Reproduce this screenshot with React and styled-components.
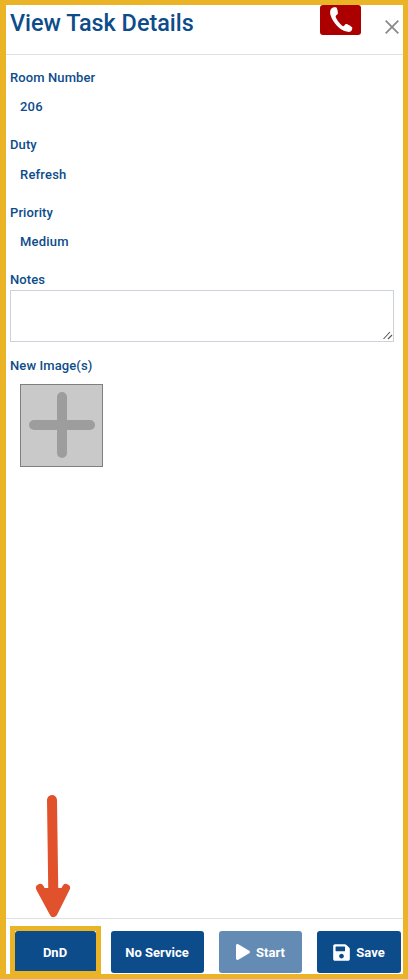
import * as React from "react";
import styled, { createGlobalStyle } from "styled-components";
import { FaPlay, FaSave } from "react-icons/fa";

const GlobalStyle = createGlobalStyle`
  html, body {
    margin: 0;
    padding: 0;
    background: #fff;
    font-family: Roboto, "Liberation Sans", sans-serif;
  }
`;

const Page = styled.div`
  position: relative;
  width: 408px;
  height: 979px;
  overflow: hidden;
  display: flex;
  flex-direction: column;
  background: #fff;
  color: #0d4c8b;
`;

const Frame = styled.div`
  position: absolute;
  inset: 0;
  box-sizing: border-box;
  border-style: solid;
  border-color: #ebb326;
  border-width: 5px 5px 5px 6px;
  pointer-events: none;
`;

const ButtonMark = styled.div`
  position: absolute;
  left: 10px;
  top: 926px;
  width: 91px;
  height: 50px;
  box-sizing: border-box;
  border: 5px solid #ebb326;
  pointer-events: none;
`;

const Arrow = styled.svg`
  position: absolute;
  left: 30px;
  top: 790px;
  pointer-events: none;
`;

const Header = styled.header`
  height: 54px;
  flex: none;
  display: flex;
  align-items: flex-start;
  padding: 0 9px 0 10px;
  border-bottom: 1px solid #e0e0e4;
`;

const Title = styled.h1`
  margin: 10px 0 0;
  font-size: 23.4px;
  line-height: 26px;
  font-weight: 500;
  flex: 1;
`;

const CallButton = styled.div`
  width: 41px;
  height: 30px;
  margin-top: 5px;
  background: #ac0000;
  border-radius: 3px;
  display: flex;
  align-items: center;
  justify-content: center;
`;

const Close = styled.svg`
  margin: 20px 0 0 24px;
  flex: none;
`;

const Body = styled.main`
  flex: 1;
  padding: 15px 14px 0 10px;
`;

const Label = styled.div`
  font-size: 13px;
  line-height: 16px;
  font-weight: 500;
  letter-spacing: 0.1px;
`;

const Value = styled.div`
  font-size: 13px;
  line-height: 16px;
  font-weight: 500;
  padding-left: 10px;
  margin: 13.2px 0 22.2px;
  letter-spacing: 0.2px;
`;

const NotesWrap = styled.div`
  position: relative;
  margin: 1.8px 0 16px;
`;

const Notes = styled.textarea`
  display: block;
  box-sizing: border-box;
  width: 384px;
  height: 52px;
  border: 1px solid #cdd2da;
  border-radius: 0;
  outline: none;
  background: #fff;
  resize: none;
`;

const ResizeGrip = styled.svg`
  position: absolute;
  right: 1px;
  bottom: 2px;
  pointer-events: none;
`;

const AddImage = styled.div`
  width: 83px;
  height: 83px;
  box-sizing: border-box;
  margin: 10px 0 0 10px;
  background: #c9c9c9;
  border: 1px solid #7f7f7f;
  display: flex;
  align-items: center;
  justify-content: center;
`;

const Footer = styled.footer`
  height: 61px;
  flex: none;
  box-sizing: border-box;
  border-top: 1px solid #e0e0e4;
  padding: 12px 7px 0 15px;
  display: flex;
  justify-content: space-between;
`;

const ActionButton = styled.div`
  width: ${(props) => props.$width}px;
  height: 42px;
  box-sizing: border-box;
  padding-right: 1px;
  background: ${(props) => (props.$disabled ? "#648bb3" : "#0d4c8b")};
  border-radius: 3px;
  color: #fff;
  display: flex;
  align-items: center;
  justify-content: center;
  gap: 5px;
  font-size: 13px;
  font-weight: 700;
`;

const fields = [
  { label: "Room Number", value: "206" },
  { label: "Duty", value: "Refresh" },
  { label: "Priority", value: "Medium" },
];

export default function App() {
  return (
    <Page>
      <GlobalStyle />
      <Header>
        <Title>View Task Details</Title>
        <CallButton>
          <svg width="24" height="26" viewBox="0 0 24 26">
            <path
              d="M2.4 1.6 C3.6 .4 6.4 -.2 7.4 .6 C8.4 2 9.2 5.6 8.8 6.8 C8.4 7.8 6.6 8.4 6.6 9.6 C7.2 12.6 11.6 18 14 19.2 C15.2 19.4 15.8 17.4 16.8 17 C18.4 17 22.4 19.2 23.2 20.6 C23.6 21.8 22.4 24.4 21 24.8 C18.6 25.4 14.4 24 11 21.6 C6.4 18 2.8 12.6 1.4 7.8 C.8 5.4 1.2 2.8 2.4 1.6 Z"
              fill="#fff"
            />
          </svg>
        </CallButton>
        <Close width="14" height="14" viewBox="0 0 14 14">
          <path d="M.7 .7 L13.3 13.3 M13.3 .7 L.7 13.3" stroke="#8a8a8a" strokeWidth="1.8" fill="none" />
        </Close>
      </Header>
      <Body>
        {fields.map((field) => (
          <div key={field.label}>
            <Label>{field.label}</Label>
            <Value>{field.value}</Value>
          </div>
        ))}
        <Label>Notes</Label>
        <NotesWrap>
          <Notes />
          <ResizeGrip width="10" height="9" viewBox="0 0 10 9">
            <path d="M.5 8 L7 1 M5 8 L9 4" stroke="#555" strokeWidth="1.1" fill="none" />
          </ResizeGrip>
        </NotesWrap>
        <Label>New Image(s)</Label>
        <AddImage>
          <svg width="66" height="66" viewBox="0 0 66 66">
            <path d="M33 5 V61 M5 33 H61" stroke="#9d9d9d" strokeWidth="10" strokeLinecap="round" fill="none" />
          </svg>
        </AddImage>
      </Body>
      <Footer>
        <ActionButton $width={81}>DnD</ActionButton>
        <ActionButton $width={93}>No Service</ActionButton>
        <ActionButton $width={83} $disabled>
          <FaPlay size={16} />
          Start
        </ActionButton>
        <ActionButton $width={84}>
          <FaSave size={19} />
          Save
        </ActionButton>
      </Footer>
      <Frame />
      <ButtonMark />
      <Arrow width="50" height="132" viewBox="0 0 50 132">
        <path
          d="M22 10 L23.5 118"
          stroke="#e0512c"
          strokeWidth="10"
          strokeLinecap="round"
          fill="none"
        />
        <path
          d="M10 98 L23.5 123 L36 98"
          stroke="#e0512c"
          strokeWidth="8"
          strokeLinecap="round"
          strokeLinejoin="round"
          fill="#e0512c"
        />
      </Arrow>
    </Page>
  );
}
